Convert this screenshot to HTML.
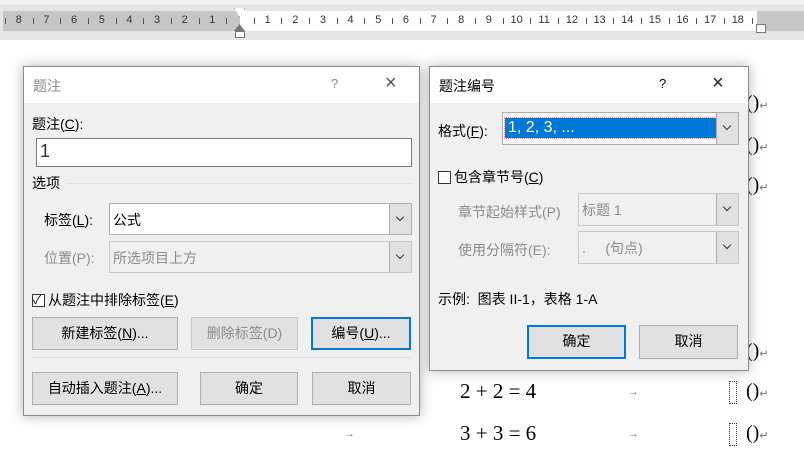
<!DOCTYPE html>
<html><head><meta charset="utf-8"><style>
*{box-sizing:border-box;margin:0;padding:0}
body{width:804px;height:451px;overflow:hidden;background:#fff;font-family:"Liberation Sans","Noto Sans CJK SC",sans-serif;font-size:14px;color:#000;position:relative}
.a{position:absolute;white-space:nowrap}
.dlg{position:absolute;background:#f0f0f0;border:1px solid #8c8c8c;box-shadow:0 0 12px rgba(0,0,0,.3)}
.tb{position:absolute;left:0;top:0;right:0;height:36px;background:#fff}
.inp{position:absolute;background:#fff;border:1px solid #7a7a7a}
.dd{position:absolute;top:0;right:0;bottom:0;width:22px;background:#e1e1e1;border-left:1px solid #adadad}
.dd:after{content:"";position:absolute;left:7px;top:10px;width:5px;height:5px;border-right:1px solid #333;border-bottom:1px solid #333;transform:rotate(45deg)}
.btn{position:absolute;background:#e1e1e1;border:1px solid #adadad;text-align:center;line-height:31px}
.blue{border:2px solid #0078d7;line-height:29px}
.gray{color:#8a8a8a}
.cb{display:inline-block;width:13px;height:13px;border:1px solid #333;background:#fff;vertical-align:-2px;margin-right:3px;position:relative}
.m{font-family:"Liberation Serif","DejaVu Serif",serif;font-size:21px}
.par{font-family:"Liberation Serif",serif;font-size:20px}
.ret{font-size:11px;color:#777}
.arr{font-size:11px;color:#777}
.dot{position:absolute;width:8px;height:23px;border:1px dotted #333}
</style></head><body>
<div class="a" style="left:0;top:0;width:804px;height:6px;background:#f3f3f3;border-bottom:1px solid #ddd"></div>
<div class="a" style="left:0;top:6px;width:804px;height:34px;background:#e6e6e6"></div>
<div class="a" style="left:3px;top:11px;width:801px;height:20px;background:#c6c6c6"></div>
<div class="a" style="left:240px;top:11px;width:517px;height:20px;background:#fff"></div>
<div id="rul"></div>
<div class="a" style="left:234px;top:8px;width:11px;height:9px;border:1px solid #777;border-top:none;background:#fff;clip-path:polygon(0 0,100% 0,50% 100%)"></div>
<div class="a" style="left:234px;top:24px;width:11px;height:7px;background:#777;clip-path:polygon(50% 0,100% 100%,0 100%)"></div>
<div class="a" style="left:235px;top:31px;width:10px;height:7px;border:1px solid #777;background:#fff"></div>
<div class="a" style="left:756px;top:24px;width:10px;height:9px;border:1px solid #777;background:#fff"></div>
<div class="a" style="left:3px;top:40px;width:801px;height:411px;background:#fff"></div>

<div class="a m" style="left:460px;top:379px">2 + 2 = 4</div>
<div class="a m" style="left:460px;top:421px">3 + 3 = 6</div>
<div class="a arr" style="left:628px;top:386px">→</div>
<div class="a arr" style="left:628px;top:428px">→</div>
<div class="a arr" style="left:344px;top:428px">→</div>
<div class="dot" style="left:729px;top:381px"></div>
<div class="dot" style="left:729px;top:423px"></div>
<div class="a par" style="left:746px;top:92px">()<span class="ret">↵</span></div>
<div class="a par" style="left:746px;top:134px">()<span class="ret">↵</span></div>
<div class="a par" style="left:746px;top:174px">()<span class="ret">↵</span></div>
<div class="a par" style="left:746px;top:340px">()<span class="ret">↵</span></div>
<div class="a par" style="left:746px;top:380px">()<span class="ret">↵</span></div>
<div class="a par" style="left:746px;top:422px">()<span class="ret">↵</span></div>

<div class="dlg" style="left:23px;top:66px;width:397px;height:350px">
<div class="tb"></div>
<div class="a gray" style="left:9px;top:9px">题注</div>
<div class="a gray" style="left:307px;top:9px;font-size:13px">?</div>
<div class="a" style="left:361px;top:5px;font-size:20px;color:#555;font-weight:200">×</div>
<div class="a" style="left:8px;top:47px">题注(<u>C</u>):</div>
<div class="inp" style="left:12px;top:71px;width:376px;height:29px"><span style="position:absolute;left:3px;top:2px;font-size:18px;color:#333">1</span></div>
<div class="a" style="left:8px;top:106px">选项</div>
<div class="a" style="left:43px;top:116px;width:345px;height:1px;background:#ddd"></div>
<div class="a" style="left:20px;top:143px">标签(<u>L</u>):</div>
<div class="inp" style="left:85px;top:136px;width:303px;height:32px;border-color:#adadad"><span style="position:absolute;left:3px;top:6px">公式</span><div class="dd"></div></div>
<div class="a gray" style="left:20px;top:181px">位置(P):</div>
<div class="inp" style="left:85px;top:174px;width:303px;height:32px;background:#f0f0f0;border-color:#c8c8c8"><span class="gray" style="position:absolute;left:3px;top:6px">所选项目上方</span><div class="dd"></div></div>
<div class="a" style="left:8px;top:223px"><span class="cb"><span style="position:absolute;left:0;top:-4px;font-size:12px">✓</span></span>从题注中排除标签(<u>E</u>)</div>
<div class="btn" style="left:8px;top:250px;width:146px;height:33px">新建标签(<u>N</u>)...</div>
<div class="btn gray" style="left:167px;top:250px;width:107px;height:33px;border-color:#c8c8c8">删除标签(D)</div>
<div class="btn blue" style="left:287px;top:250px;width:100px;height:33px">编号(<u>U</u>)...</div>
<div class="a" style="left:8px;top:290px;width:379px;height:1px;background:#ddd"></div>
<div class="btn" style="left:8px;top:305px;width:146px;height:33px">自动插入题注(<u>A</u>)...</div>
<div class="btn" style="left:176px;top:305px;width:98px;height:33px">确定</div>
<div class="btn" style="left:288px;top:305px;width:99px;height:33px">取消</div>
</div>

<div class="dlg" style="left:429px;top:66px;width:320px;height:305px">
<div class="tb"></div>
<div class="a" style="left:9px;top:9px">题注编号</div>
<div class="a" style="left:229px;top:9px;font-size:13px">?</div>
<div class="a" style="left:282px;top:5px;font-size:20px;color:#222;font-weight:200">×</div>
<div class="a" style="left:8px;top:54px">格式(<u>F</u>):</div>
<div class="inp" style="left:72px;top:45px;width:237px;height:33px;border-color:#adadad"><div style="position:absolute;left:2px;top:5px;width:211px;height:20px;background:#0078d7;color:#fff;font-size:16px;line-height:20px;padding-left:3px;outline:1px dotted #f8a">1, 2, 3, ...</div><div class="dd"></div></div>
<div class="a" style="left:8px;top:100px"><span class="cb"></span>包含章节号(<u>C</u>)</div>
<div class="a gray" style="left:28px;top:135px">章节起始样式(P)</div>
<div class="inp" style="left:148px;top:126px;width:161px;height:33px;background:#f0f0f0;border-color:#c8c8c8"><span class="gray" style="position:absolute;left:3px;top:6px">标题 1</span><div class="dd"></div></div>
<div class="a gray" style="left:28px;top:173px">使用分隔符(E):</div>
<div class="inp" style="left:148px;top:164px;width:161px;height:33px;background:#f0f0f0;border-color:#c8c8c8"><span class="gray" style="position:absolute;left:3px;top:6px">.&nbsp;&nbsp;&nbsp;&nbsp;&nbsp;(句点)</span><div class="dd"></div></div>
<div class="a" style="left:8px;top:222px">示例:&nbsp;&nbsp;图表 II-1，表格 1-A</div>
<div class="btn blue" style="left:97px;top:258px;width:99px;height:34px">确定</div>
<div class="btn" style="left:209px;top:258px;width:99px;height:34px">取消</div>
</div>

<script>
var r=document.getElementById('rul'),h='';
function lab(x,t){h+='<div class="a" style="left:'+(x-6)+'px;top:14px;width:12px;text-align:center;font-size:11px;color:#333">'+t+'</div>';}
function tick(x){h+='<div class="a" style="left:'+x+'px;top:18px;width:1px;height:6px;background:#555"></div>';}
var s=27.65;
for(var k=1;k<=8;k++){lab(240-k*s,k);tick(Math.round(240-k*s+s/2));}
tick(Math.round(240-8.5*s));
for(var k=1;k<=18;k++){lab(240+k*s,k);tick(Math.round(240+k*s-s/2));}
tick(Math.round(240+18.5*s));
r.innerHTML=h;
</script>
</body></html>
